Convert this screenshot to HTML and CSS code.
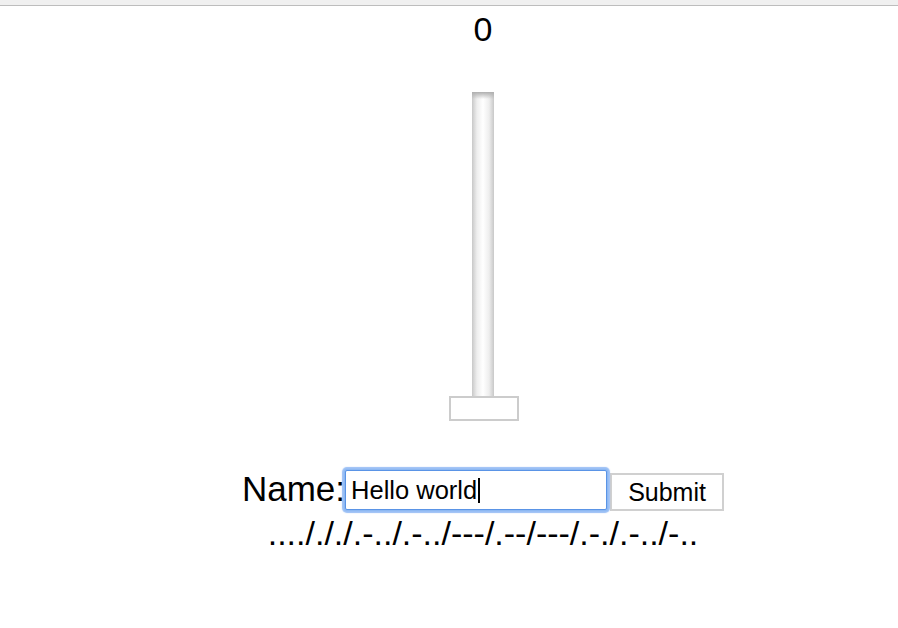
FILE: index.html
```html
<!DOCTYPE html>
<html>
<head>
<meta charset="utf-8">
<title>Morse</title>
<link rel="stylesheet" href="styles.css">
</head>
<body>
<div class="topbar"></div>
<main class="app">
  <div class="value">0</div>
  <div class="slider" role="slider" aria-valuenow="0" aria-orientation="vertical">
    <div class="track"></div>
    <div class="thumb"></div>
  </div>
  <form class="name-form" onsubmit="return false">
    <label class="name-label" for="name">Name:</label>
    <span class="input-wrap">
      <input class="name-input focused" id="name" type="text" value="Hello world">
      <span class="caret"></span>
    </span>
    <button class="submit" type="submit">Submit</button>
  </form>
  <div class="morse">..../././.-../.-../---/.--/---/.-./.-../-..</div>
</main>
</body>
</html>
```

FILE: styles.css
```css
html, body {
  margin: 0;
  padding: 0;
  background: #ffffff;
}

body {
  font-family: "Liberation Sans", Arial, Helvetica, sans-serif;
  color: #000;
}

.topbar {
  height: 5px;
  background: #f0f0f0;
  border-bottom: 1px solid #bdbdbd;
}

.app {
  display: flex;
  flex-direction: column;
  align-items: center;
  padding-left: 68px;
}

.value {
  margin-top: 3px;
  font-size: 34px;
  line-height: 40px;
}

.slider {
  margin-top: 43px;
  display: flex;
  flex-direction: column;
  align-items: center;
}

.track {
  width: 22px;
  height: 304px;
  background:
    linear-gradient(to bottom, rgba(175, 175, 175, 1) 0, rgba(255, 255, 255, 0) 7px),
    linear-gradient(to right, #c8c8c8 0, #eeeeee 5px, #ffffff 50%, #eeeeee calc(100% - 5px), #c8c8c8 100%);
}

.thumb {
  box-sizing: border-box;
  width: 70px;
  height: 25px;
  margin-left: 2px;
  background: #fff;
  border: 2px solid #cccccc;
}

.name-form {
  margin: 49px 0 0 0;
  display: flex;
  align-items: flex-start;
}

.name-label {
  font-size: 35px;
  line-height: 38px;
}

.input-wrap {
  position: relative;
  display: block;
}

.name-input {
  display: block;
  box-sizing: border-box;
  width: 262px;
  height: 40px;
  margin: 0;
  padding: 0 5px 0 5px;
  font-family: "Liberation Sans", Arial, Helvetica, sans-serif;
  font-size: 25.5px;
  color: #000;
  background: #fff;
  border: 1px solid #5a94e6;
  border-radius: 2px;
  outline: none;
}

.name-input.focused {
  box-shadow: 0 0 0 1px #8db8f2, 0 0 1px 3px rgba(120, 170, 242, 0.75);
}

.caret {
  position: absolute;
  left: 133px;
  top: 8px;
  width: 2px;
  height: 25px;
  background: #000;
}

.submit {
  box-sizing: border-box;
  width: 114px;
  height: 38px;
  margin: 3px 0 0 3px;
  padding: 0;
  font-family: "Liberation Sans", Arial, Helvetica, sans-serif;
  font-size: 25px;
  color: #000;
  background: #fff;
  border: 2px solid #d0d0d0;
  border-radius: 0;
}

.morse {
  margin-top: 3px;
  font-size: 34px;
  line-height: 38px;
}
```
